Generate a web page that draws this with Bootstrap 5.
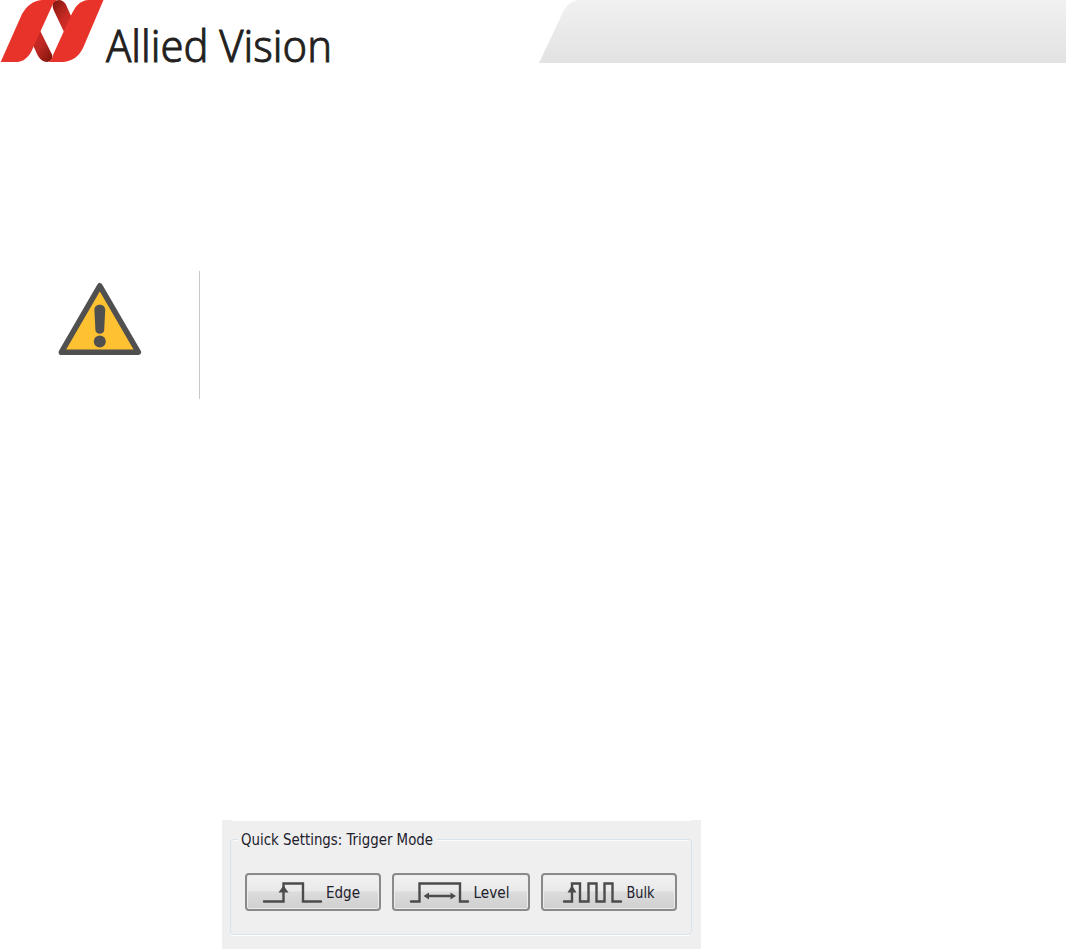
<!DOCTYPE html>
<html lang="en">
<head>
  <meta charset="UTF-8" />
  <meta name="viewport" content="width=device-width, initial-scale=1" />
  <title>Allied Vision</title>
  <link href="https://cdn.jsdelivr.net/npm/bootstrap@5.3.3/dist/css/bootstrap.min.css" rel="stylesheet" />
  <style>
    body {
      width: 1066px;
      height: 949px;
      overflow: hidden;
      background: #fff;
      font-family: "Noto Sans", "Liberation Sans", sans-serif;
    }
    svg { display: block; flex: none; overflow: visible; }
    .brand-name { font-family: "Noto Sans", sans-serif; font-weight: 300; font-size: 43.5px; fill: #231f20; stroke: #231f20; stroke-width: .9; }
    .page-header { height: 80px; }
    .notice { height: 128px; margin-top: 191px; }
    .notice-icon { width: 200px; padding: 11px 0 0 57px; border-right: 1px solid #c8c8c8; }
    .settings-panel {
      width: 479px;
      height: 129px;
      margin: 421px 0 0 222px;
      padding: 0 9px 0 8px;
      background: #efefef;
    }
    .panel-edge { height: 1px; margin: 0 1px 8px 2px; background: #fff; }
    .group-line { flex: 1; height: 13px; margin-top: 10px; border-top: 1px solid #d9e3eb; box-shadow: inset 0 1px #fbfbfb; }
    .group-line.start { flex: none; width: 8px; border-left: 1px solid #d9e3eb; border-top-left-radius: 4px; }
    .group-line.end { border-right: 1px solid #d9e3eb; border-top-right-radius: 4px; }
    .group-body {
      height: 83px;
      padding: 21px 14px 0;
      border: 1px solid #d9e3eb;
      border-top: 0;
      border-radius: 0 0 4px 4px;
      box-shadow: 0 1px #fff;
    }
    .trigger-btn {
      width: 136px;
      height: 38px;
      padding: 0;
      border: 2px solid #8a8a8a;
      border-radius: 4px;
      background: linear-gradient(#f1f1f1 0, #e9e9e9 47%, #dcdcdc 50%, #cfcfcf 100%);
      box-shadow: inset 0 0 0 1px #ececec;
    }
    .trigger-btn.level { width: 138px; }
    .ui-text { font-family: "DejaVu Sans Condensed", "DejaVu Sans", sans-serif; font-stretch: condensed; font-size: 15px; fill: #20202c; }
    .wave { fill: none; stroke: #4b4b4b; stroke-width: 2.4; stroke-linecap: round; }
    .tip { fill: #4b4b4b; }
  </style>
</head>
<body>
  <header class="page-header d-flex justify-content-between">
    <svg width="350" height="80" viewBox="0 0 350 80" role="img" aria-label="Allied Vision">
      <defs>
        <linearGradient id="foldTop" x1="0" y1="0" x2=".8" y2="1">
          <stop offset="0" stop-color="#7f160f" />
          <stop offset=".65" stop-color="#c92a24" />
          <stop offset="1" stop-color="#d62d28" />
        </linearGradient>
        <linearGradient id="foldBottom" x1="0" y1="0" x2=".8" y2="1">
          <stop offset="0" stop-color="#d12a26" />
          <stop offset=".5" stop-color="#bd2722" />
          <stop offset="1" stop-color="#86170f" />
        </linearGradient>
      </defs>
      <path fill="url(#foldTop)" d="M53 3C54 1 56 0 60 0C64 1 66 4 67 7L71.5 17L64 32L55 13C53 9 52 6 53 3Z" />
      <path fill="url(#foldBottom)" d="M40 30.5L52 54.5C53 58 52 61 47 62C42 62 39 58 37 54L33 45Z" />
      <path fill="#e8332b" d="M57 0H42C32 1 27 6 22 14L.7 62H18C26 61 31 54 34 45.5L52 6C53 3 55 1 57 0Z" />
      <path fill="#e8332b" d="M103.5 0H88C79 1 75 7 71 15.5L53 55C52 59 51 61 48 62H63C73 61 79 56 83 48Z" />
      <text class="brand-name" x="106" y="62" textLength="226" lengthAdjust="spacingAndGlyphs">Allied Vision</text>
    </svg>
    <svg width="527" height="70" viewBox="0 0 527 70" aria-hidden="true">
      <defs>
        <linearGradient id="bannerFill" x1="0" y1="0" x2="0" y2="1">
          <stop offset="0" stop-color="#f1f1f1" />
          <stop offset="1" stop-color="#e2e2e2" />
        </linearGradient>
      </defs>
      <path fill="url(#bannerFill)" d="M0 63L24 12C28 4 33 1 40 0H527V63Z" />
    </svg>
  </header>

  <section class="notice d-flex">
    <div class="notice-icon">
      <svg width="86" height="76" viewBox="0 0 86 76" role="img" aria-label="Warning">
        <path d="M42.8 3.8L81.3 70.2H4.4Z" fill="#fdc132" stroke="#505050" stroke-width="5.6" stroke-linejoin="round" />
        <path d="M37.4 28C37.2 21 48.4 21 48.2 28L47.2 48C47 53 38.6 53 38.4 48Z" fill="#505050" />
        <circle cx="42.8" cy="59.4" r="6" fill="#505050" />
      </svg>
    </div>
  </section>

  <section class="settings-panel">
    <div class="panel-edge"></div>
    <div class="d-flex">
      <div class="group-line start"></div>
      <svg width="199" height="23" viewBox="0 0 199 23">
        <text class="ui-text" x="3" y="16" textLength="192" lengthAdjust="spacingAndGlyphs">Quick Settings: Trigger Mode</text>
      </svg>
      <div class="group-line end"></div>
    </div>
    <div class="group-body d-flex justify-content-between">
      <button type="button" class="btn trigger-btn">
        <svg width="132" height="34" viewBox="0 0 132 34">
          <path class="wave" d="M17 26.5H36.5V8.5H56V26.5H74" />
          <path class="tip" d="M36.5 10.5L41.5 17.5H31.5Z" />
          <text class="ui-text" x="79" y="22.5" textLength="34" lengthAdjust="spacingAndGlyphs">Edge</text>
        </svg>
      </button>
      <button type="button" class="btn trigger-btn level">
        <svg width="134" height="34" viewBox="0 0 134 34">
          <path class="wave" d="M17 26.5H25.5V8.5H66V26.5H74" />
          <path class="wave" d="M34 21H58" />
          <path class="tip" d="M29.5 21L35 17.5V24.5ZM62 21L56.5 17.5V24.5Z" />
          <text class="ui-text" x="79.5" y="22.5" textLength="36" lengthAdjust="spacingAndGlyphs">Level</text>
        </svg>
      </button>
      <button type="button" class="btn trigger-btn">
        <svg width="132" height="34" viewBox="0 0 132 34">
          <path class="wave" d="M21 26.5H29V8.5H37V26.5H45.5V8.5H53.5V26.5H61.5V8.5H69.5V26.5H78" />
          <path class="tip" d="M29 10.5L33.5 17.5H24.5Z" />
          <text class="ui-text" x="83.5" y="22.5" textLength="28" lengthAdjust="spacingAndGlyphs">Bulk</text>
        </svg>
      </button>
    </div>
  </section>
  <script src="https://cdn.jsdelivr.net/npm/bootstrap@5.3.3/dist/js/bootstrap.bundle.min.js"></script>
</body>
</html>
